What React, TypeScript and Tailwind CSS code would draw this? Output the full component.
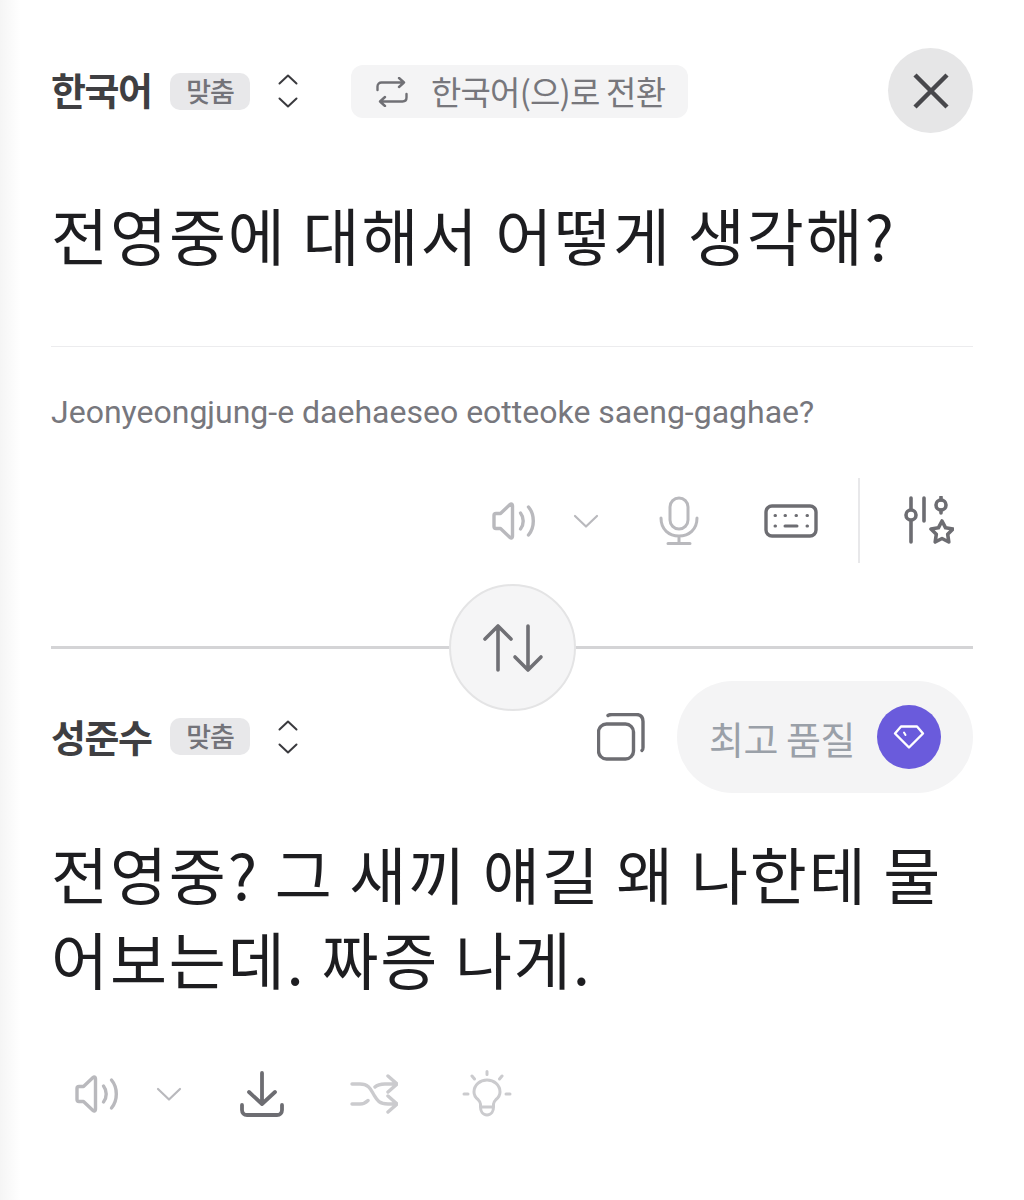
const font = { fontFamily: '"Noto Sans CJK KR", "Noto Sans", sans-serif' };

function Sv({ className, children, w, h, vb }: { className?: string; children: React.ReactNode; w: number; h: number; vb: string }) {
  return (
    <svg width={w} height={h} viewBox={vb} fill="none" stroke="currentColor" strokeLinecap="round" strokeLinejoin="round" className={className}>
      {children}
    </svg>
  );
}

function UpDown() {
  return (
    <Sv w={22} h={36} vb="0 0 22 36" className="text-[#3a3a3e]">
      <path d="M2.5 10.5 11 2.5l8.5 8" strokeWidth="2" />
      <path d="M2.5 25.5 11 33.5l8.5-8" strokeWidth="2" />
    </Sv>
  );
}

function Badge() {
  return (
    <span className="flex h-[37px] w-[80px] items-center justify-center rounded-[10px] bg-[#e8e8ea] text-[27px] font-medium tracking-[-1px] text-[#737379]">
      맞춤
    </span>
  );
}

function Speaker() {
  return (
    <Sv w={46} h={46} vb="0 0 46 46" className="text-[#b9b9bd]">
      <path d="M3 17.5c0-1.2.8-2 2-2h4.5L19 6.5c1.2-1 2.5-.4 2.5 1.2v30.6c0 1.6-1.3 2.2-2.5 1.2l-9.5-9H5c-1.2 0-2-.8-2-2z" strokeWidth="3.400" />
      <path d="M29.500 15c3.6 4.6 3.6 11.4 0 16" strokeWidth="3.400" />
      <path d="M37.500 9c6.400 7.600 6.400 20.400 0 28" strokeWidth="3.400" />
    </Sv>
  );
}

function Chevron() {
  return (
    <Sv w={26} h={16} vb="0 0 26 16" className="text-[#b9b9bd]">
      <path d="M2 3l11 10.500L24 3" strokeWidth="2.200" />
    </Sv>
  );
}

export default function App() {
  return (
    <div style={font} className="relative h-[1200px] w-[1024px] overflow-hidden bg-gradient-to-r from-[#f5f5f5] from-0% to-white to-[2%] px-[51px] pt-[48px] text-[#1c1c1e]">
      <div className="flex h-[85px] items-center">
        <span className="mb-[3px] w-[101px] whitespace-nowrap text-[38px] font-bold leading-none tracking-[-1.500px] text-[#3f3f42]">한국어</span>
        <span className="ml-[18px] mt-[2px]"><Badge /></span>
        <span className="ml-[27px] flex"><UpDown /></span>
        <button className="ml-[52px] mt-[2px] flex h-[53px] w-[337px] items-center rounded-[12px] bg-[#f4f4f5] pl-[24px] text-[33px] tracking-[-0.800px] text-[#77777c]">
          <Sv w={34} h={30} vb="0 0 34 30" className="shrink-0 text-[#707075]">
            <path d="M2.500 13V9.500C2.500 7 4.300 5.500 6.500 5.500H29M24 1l5 4.500-5 4.500" strokeWidth="2.400" />
            <path d="M31.500 17v3.500c0 2.500-1.800 4-4 4H5M10 29l-5-4.500L10 20" strokeWidth="2.400" />
          </Sv>
          <span className="ml-[22px] whitespace-nowrap">한국어(으)로 전환</span>
        </button>
        <button className="ml-auto flex h-[85px] w-[85px] items-center justify-center rounded-full bg-[#e6e6e7]">
          <Sv w={38} h={38} vb="0 0 38 38" className="text-[#47474b]">
            <path d="M3 3l32 32M35 3L3 35" strokeWidth="4.500" strokeLinecap="butt" />
          </Sv>
        </button>
      </div>

      <div className="mt-[67px] h-[68px] whitespace-nowrap text-[62px] leading-[68px] tracking-[1.900px] text-[#1d1d20]">전영중에 대해서 어떻게 생각해?</div>

      <div className="mt-[78px] h-[1px] bg-[#ececee]" />

      <div style={{ fontFamily: 'Roboto, sans-serif' }} className="mt-[45px] h-[40px] whitespace-nowrap text-[32px] leading-[40px] text-[#77777d]">
        Jeonyeongjung-e daehaeseo eotteoke saeng-gaghae?
      </div>

      <div className="mt-[46px] flex h-[85px] items-center">
        <span className="ml-[440px] flex"><Speaker /></span>
        <span className="ml-[36px] flex"><Chevron /></span>
        <span className="ml-[60px] flex">
          <Sv w={40} h={50} vb="0 0 40 50" className="text-[#b9b9bd]">
            <rect x="11" y="2" width="18" height="31" rx="9" strokeWidth="3" />
            <path d="M2 22c0 11.500 8 18 18 18s18-6.500 18-18M20 40v7.500M9 47.500h22" strokeWidth="3" />
          </Sv>
        </span>
        <span className="ml-[65px] flex">
          <Sv w={54} h={34} vb="0 0 54 34" className="text-[#6d6d72]">
            <rect x="2" y="2" width="50" height="30" rx="6" strokeWidth="3.400" />
            <path d="M11 11.500h.5M21 11.500h.5M32 11.500h.5M43 11.500h.5M11 22h.5M43 22h.5" strokeWidth="3" />
            <path d="M21 22h12" strokeWidth="3" />
          </Sv>
        </span>
        <span className="ml-[40px] h-[85px] w-[2px] bg-[#e8e8ea]" />
        <span className="ml-[44px] flex">
          <Sv w={50} h={50} vb="0 0 50 50" className="text-[#6d6d72]">
            <path d="M7 2v11M7 25v21M20 2v23" strokeWidth="3.600" />
            <circle cx="7" cy="19" r="5" strokeWidth="3.600" />
            <circle cx="37" cy="9" r="5" strokeWidth="3.600" />
            <path d="M37 1v3M37 14v3" strokeWidth="3.600" />
            <path d="M38 25l3.600 6.800 7.400 1.200-5.300 5.300 1.100 7.700-6.800-3.500-6.800 3.500 1.100-7.700-5.300-5.300 7.400-1.200z" strokeWidth="3.600" />
          </Sv>
        </span>
      </div>

      <div className="relative mt-[83px] h-[3px] bg-[#d4d4d6]">
        <button className="absolute left-[398px] top-[-62px] flex h-[127px] w-[127px] items-center justify-center rounded-full border-[2px] border-[#e4e4e5] bg-[#f5f5f6]">
          <Sv w={62} h={50} vb="0 0 62 50" className="ml-[3px] text-[#707075]">
            <path d="M15 47V3M2 16 15 3l13 13" strokeWidth="3.600" />
            <path d="M45 3v44M32 34l13 13 13-13" strokeWidth="3.600" />
          </Sv>
        </button>
      </div>

      <div className="mt-[32px] flex h-[112px] items-center">
        <span className="mb-[3px] w-[101px] whitespace-nowrap text-[38px] font-bold leading-none tracking-[-1.500px] text-[#3f3f42]">성준수</span>
        <span className="mb-[2px] ml-[18px]"><Badge /></span>
        <span className="ml-[27px] flex"><UpDown /></span>
        <span className="ml-auto flex">
          <Sv w={48} h={48} vb="0 0 48 48" className="text-[#6d6d72]">
            <rect x="1.500" y="11" width="35" height="35" rx="8" strokeWidth="3.400" />
            <path d="M11 2.500c1-1 2-1 4-1h24c4.500 0 7 2.500 7 7v26c0 1.500 0 2.500-1 3" strokeWidth="3.400" />
          </Sv>
        </span>
        <div className="ml-[32px] flex h-[112px] w-[296px] items-center rounded-full bg-[#f4f4f5] pl-[32px]">
          <span className="whitespace-nowrap text-[38px] tracking-[-0.500px] text-[#9aa0a8]">최고 품질</span>
          <span className="ml-[22px] flex h-[64px] w-[64px] items-center justify-center rounded-full bg-[#6a5bdc]">
            <Sv w={32} h={26} vb="0 0 32 26" className="text-white">
              <path d="M8 2.500h16l6 7-14 14-14-14z" strokeWidth="2.400" />
              <path d="M11 8.500l1.500 2.500" strokeWidth="2" />
            </Sv>
          </span>
        </div>
      </div>

      <div className="mt-[38px] whitespace-nowrap text-[62px] leading-[85px] tracking-[1.850px] text-[#1d1d20]">
        <div>전영중? 그 새끼 얘길 왜 나한테 물</div>
        <div>어보는데. 짜증 나게.</div>
      </div>

      <div className="mt-[60px] flex h-[66px] items-center pl-[23px]">
        <span className="flex"><Speaker /></span>
        <span className="ml-[36px] flex"><Chevron /></span>
        <span className="ml-[58px] flex">
          <Sv w={44} h={46} vb="0 0 44 46" className="text-[#6d6d72]">
            <path d="M22 2v31M9 21l13 12 13-12" strokeWidth="3.800" />
            <path d="M2 34v5c0 3 2 5 5 5h30c3 0 5-2 5-5v-5" strokeWidth="3.800" />
          </Sv>
        </span>
        <span className="ml-[66px] flex">
          <Sv w={48} h={42} vb="0 0 48 42" className="text-[#cbcbce]">
            <path d="M2 11h8c9 0 11 6 14 11s5 9 14 9h8M38 23l9 8-9 8" strokeWidth="3.400" />
            <path d="M2 31h8c4 0 6-1.500 8-3.500M25 14c2-2 5-3 10-3h11M38 3l9 8-9 8" strokeWidth="3.400" />
          </Sv>
        </span>
        <span className="ml-[64px] flex">
          <Sv w={50} h={48} vb="0 0 50 48" className="text-[#cbcbce]">
            <path d="M25 1.500v3M10 6l2.500 3M40 6l-2.500 3M2 24h4M44 24h4" strokeWidth="3" />
            <path d="M18.500 37v-3c0-2-1-3-2.500-4.500C13.500 27.500 12 25 12 22c0-7 6-12 13-12s13 5 13 12c0 3-1.500 5.500-4 7.500-1.500 1.500-2.500 2.500-2.500 4.500v3zM18.500 37c0 4 2 8 6.500 8s6.500-4 6.500-8" strokeWidth="3" />
          </Sv>
        </span>
      </div>
    </div>
  );
}
